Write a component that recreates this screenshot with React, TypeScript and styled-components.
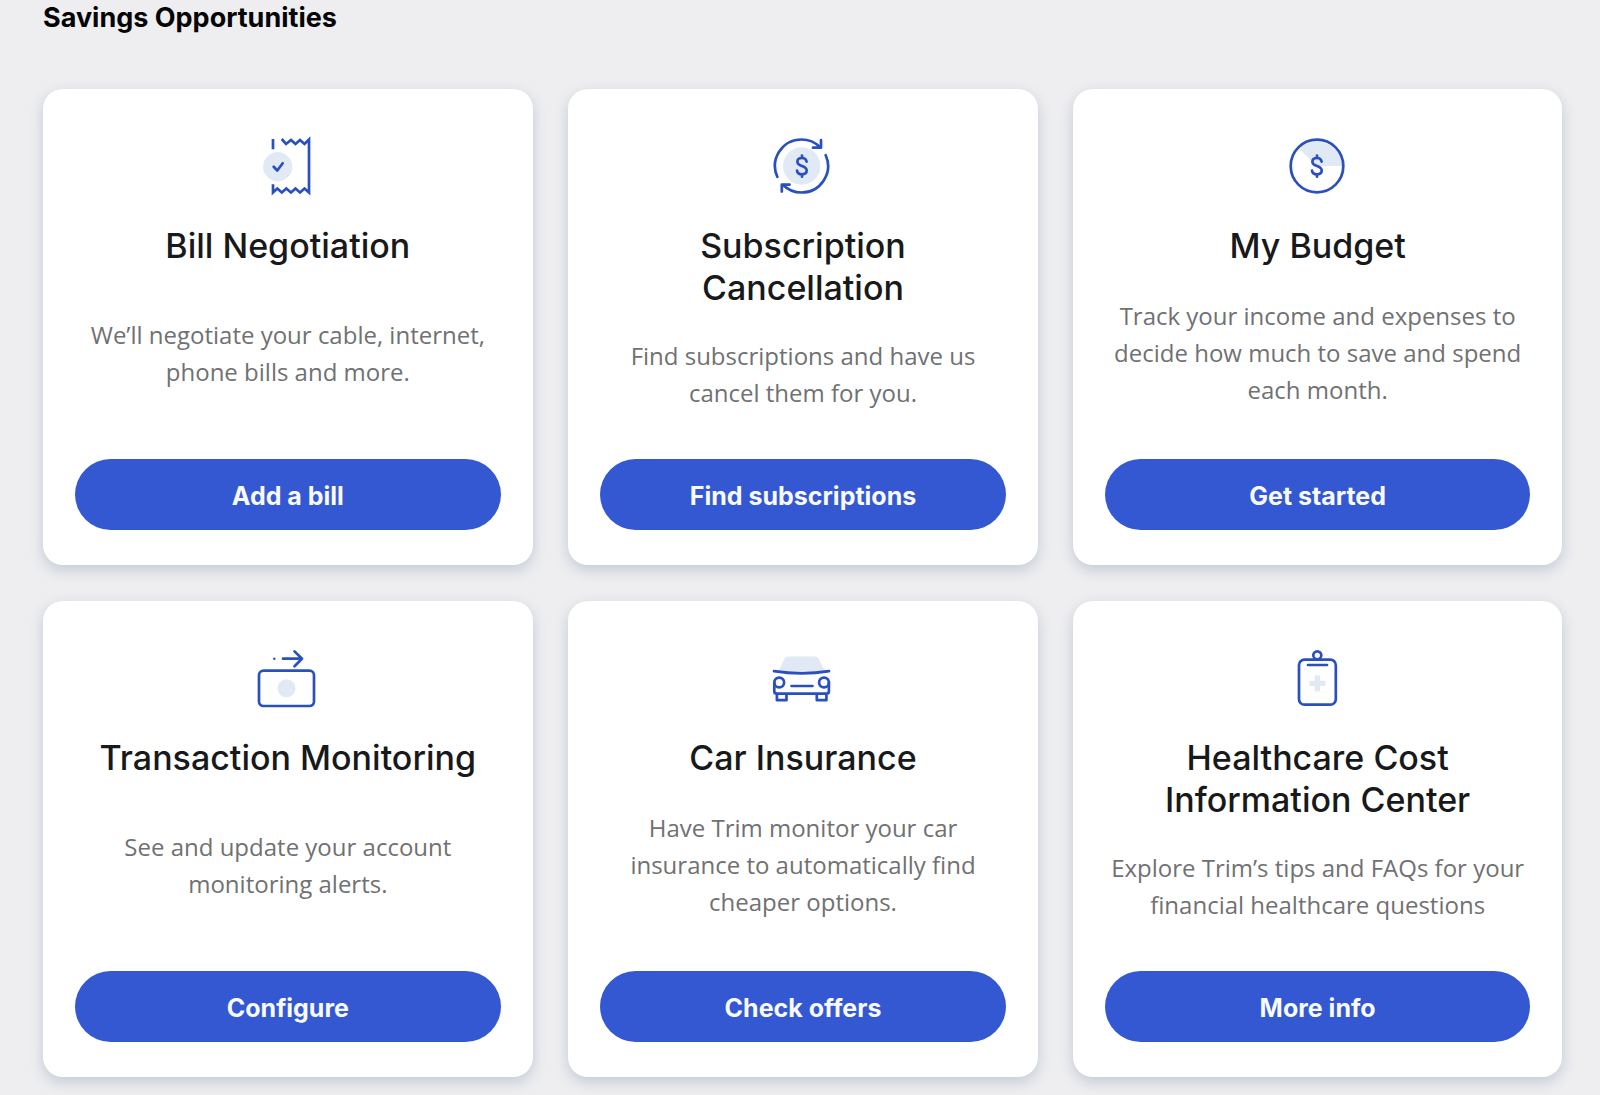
import React from "react";
import styled, { createGlobalStyle } from "styled-components";

const ink = "#2a50bd";
const tint = "#e1eaf4";

const GlobalStyle = createGlobalStyle`
  *, *::before, *::after { box-sizing: border-box; }
  body {
    margin: 0;
    background: #eeeef0;
    font-family: "Open Sans", "Noto Sans", sans-serif;
  }
`;

const Page = styled.main`
  padding: 0 38px 18px 43px;
`;

const Heading = styled.h1`
  margin: 0 0 53px;
  color: #050505;
  font: 700 27px/36px Inter, sans-serif;
`;

const Grid = styled.div`
  display: grid;
  grid-template-columns: 489fr 470fr 488fr;
  gap: 36px 35px;
`;

const Card = styled.article`
  display: flex;
  flex-direction: column;
  align-items: center;
  min-height: 476px;
  padding: 44px 32px 35px;
  border-radius: 20px;
  background: #ffffff;
  box-shadow: 0 5px 14px rgba(50, 80, 130, 0.23);
  text-align: center;
`;

const Icon = styled.svg`
  width: 64px;
  height: 64px;
  margin-bottom: 28px;
  fill: none;
  stroke: ${ink};
  stroke-width: 2.7;
  stroke-linecap: round;
  stroke-linejoin: round;

  .tint {
    fill: ${tint};
    stroke: none;
  }
`;

const Title = styled.h2`
  margin: 0;
  color: #18191b;
  font: 500 34px/42px Inter, sans-serif;
`;

const Description = styled.p`
  display: flex;
  flex: 1;
  align-items: center;
  margin: 0 0 21px;
  padding: 0 4px;
  color: #707173;
  font-size: 24px;
  line-height: 37px;
`;

const Action = styled.button`
  width: 100%;
  height: 71px;
  padding: 2px 16px 0;
  border: 0;
  border-radius: 36px;
  background: #3358d2;
  color: #f8faff;
  font: 700 25px/32px Inter, sans-serif;
  cursor: pointer;
`;

const Receipt = () => (
  <>
    <path strokeLinecap="butt" strokeLinejoin="miter" d="M17 6v10.3M25.7 6l4.3 5 5-4 4.5 4 4.5-4 4.5 4L53 6.5v53l-4.5-4-4.5 4-4.5-4-4.5 4-4.7-4-4.5 4-4.5-4-4.3 4V51.3" />
    <circle className="tint" cx="21.7" cy="33.7" r="14.6" />
    <path d="M17.7 33.7l3.6 3.8 5.4-7.2" />
  </>
);

const Dollar = () => (
  <path d="M35.6 28.6C35.2 26.2 33.4 25 31 25c-2.7 0-4.6 1.4-4.6 3.7 0 2.5 1.9 3.4 4.6 4.3 2.9 1 4.7 2 4.7 4.5 0 2.3-1.9 3.8-4.7 3.8s-4.7-1.5-5-3.8M31 22.6V25M31 41.3v2.4" />
);

const Renewal = () => (
  <>
    <circle className="tint" cx="30.7" cy="33" r="18.7" />
    <path d="M6.300 43.800A26.500 26.500 0 0 1 30.500 6.500A26.500 26.500 0 0 1 49.200 14.300M50 7.200v7.500h-8M54.700 22.200A26.500 26.500 0 0 1 30.500 59.500A26.500 26.500 0 0 1 11.800 51.700M10.800 58.600v-7h7.800" />
    <Dollar />
  </>
);

const Budget = () => (
  <>
    <path className="tint" d="M31 33L13 16A26 26 0 0 1 57 33z" />
    <circle cx="31" cy="33" r="26.3" />
    <Dollar />
  </>
);

const Transfer = () => (
  <>
    <rect x="3" y="25.7" width="55" height="35.3" rx="4.5" />
    <circle className="tint" cx="30.5" cy="43.3" r="9" />
    <path d="M27 13.7h19M38.5 6.400l7.5 7.300-7.5 7.500" />
    <circle cx="18.3" cy="13.7" r="1.2" fill={ink} stroke="none" />
  </>
);

const Car = () => (
  <>
    <path className="tint" d="M7.5 26L13.5 13.5Q14.5 11.5 17 11.5h26.5Q46.500 11.500 47.500 13.500L54 26Q31 31 7.500 26z" />
    <path d="M3 26.2Q31 30.5 58 26.2M20.5 41h21" />
    <path d="M3.300 37.700v8.500q0 2.500 2.500 2.500h49.600q2.500 0 2.500-2.500v-8.500M5.900 49v6.200h9.600V49M45.800 49v6.200h9.600V49" />
    <circle cx="8.2" cy="37.5" r="4.9" />
    <circle cx="53" cy="37.5" r="4.9" />
  </>
);

const Clipboard = () => (
  <>
    <rect x="13" y="14.7" width="36.8" height="45" rx="5.5" />
    <circle cx="31.3" cy="10.3" r="4" />
    <path d="M22 20h19" />
    <path className="tint" d="M28.7 30.3H34v5.400h5.300V41H34v5.400h-5.300V41h-5.300v-5.300h5.300z" />
  </>
);

const offers = [
  { icon: Receipt, title: "Bill Negotiation", text: "We’ll negotiate your cable, internet, phone bills and more.", action: "Add a bill" },
  { icon: Renewal, title: "Subscription Cancellation", text: "Find subscriptions and have us cancel them for you.", action: "Find subscriptions" },
  { icon: Budget, title: "My Budget", text: "Track your income and expenses to decide how much to save and spend each month.", action: "Get started" },
  { icon: Transfer, title: "Transaction Monitoring", text: "See and update your account monitoring alerts.", action: "Configure" },
  { icon: Car, title: "Car Insurance", text: "Have Trim monitor your car insurance to automatically find cheaper options.", action: "Check offers" },
  { icon: Clipboard, title: "Healthcare Cost Information Center", text: "Explore Trim’s tips and FAQs for your financial healthcare questions", action: "More info" },
];

export default function App() {
  return (
    <>
      <GlobalStyle />
      <Page>
        <Heading>Savings Opportunities</Heading>
        <Grid>
          {offers.map(({ icon: Drawing, title, text, action }) => (
            <Card key={title}>
              <Icon viewBox="0 0 64 64" aria-hidden="true">
                <Drawing />
              </Icon>
              <Title>{title}</Title>
              <Description>{text}</Description>
              <Action type="button">{action}</Action>
            </Card>
          ))}
        </Grid>
      </Page>
    </>
  );
}
